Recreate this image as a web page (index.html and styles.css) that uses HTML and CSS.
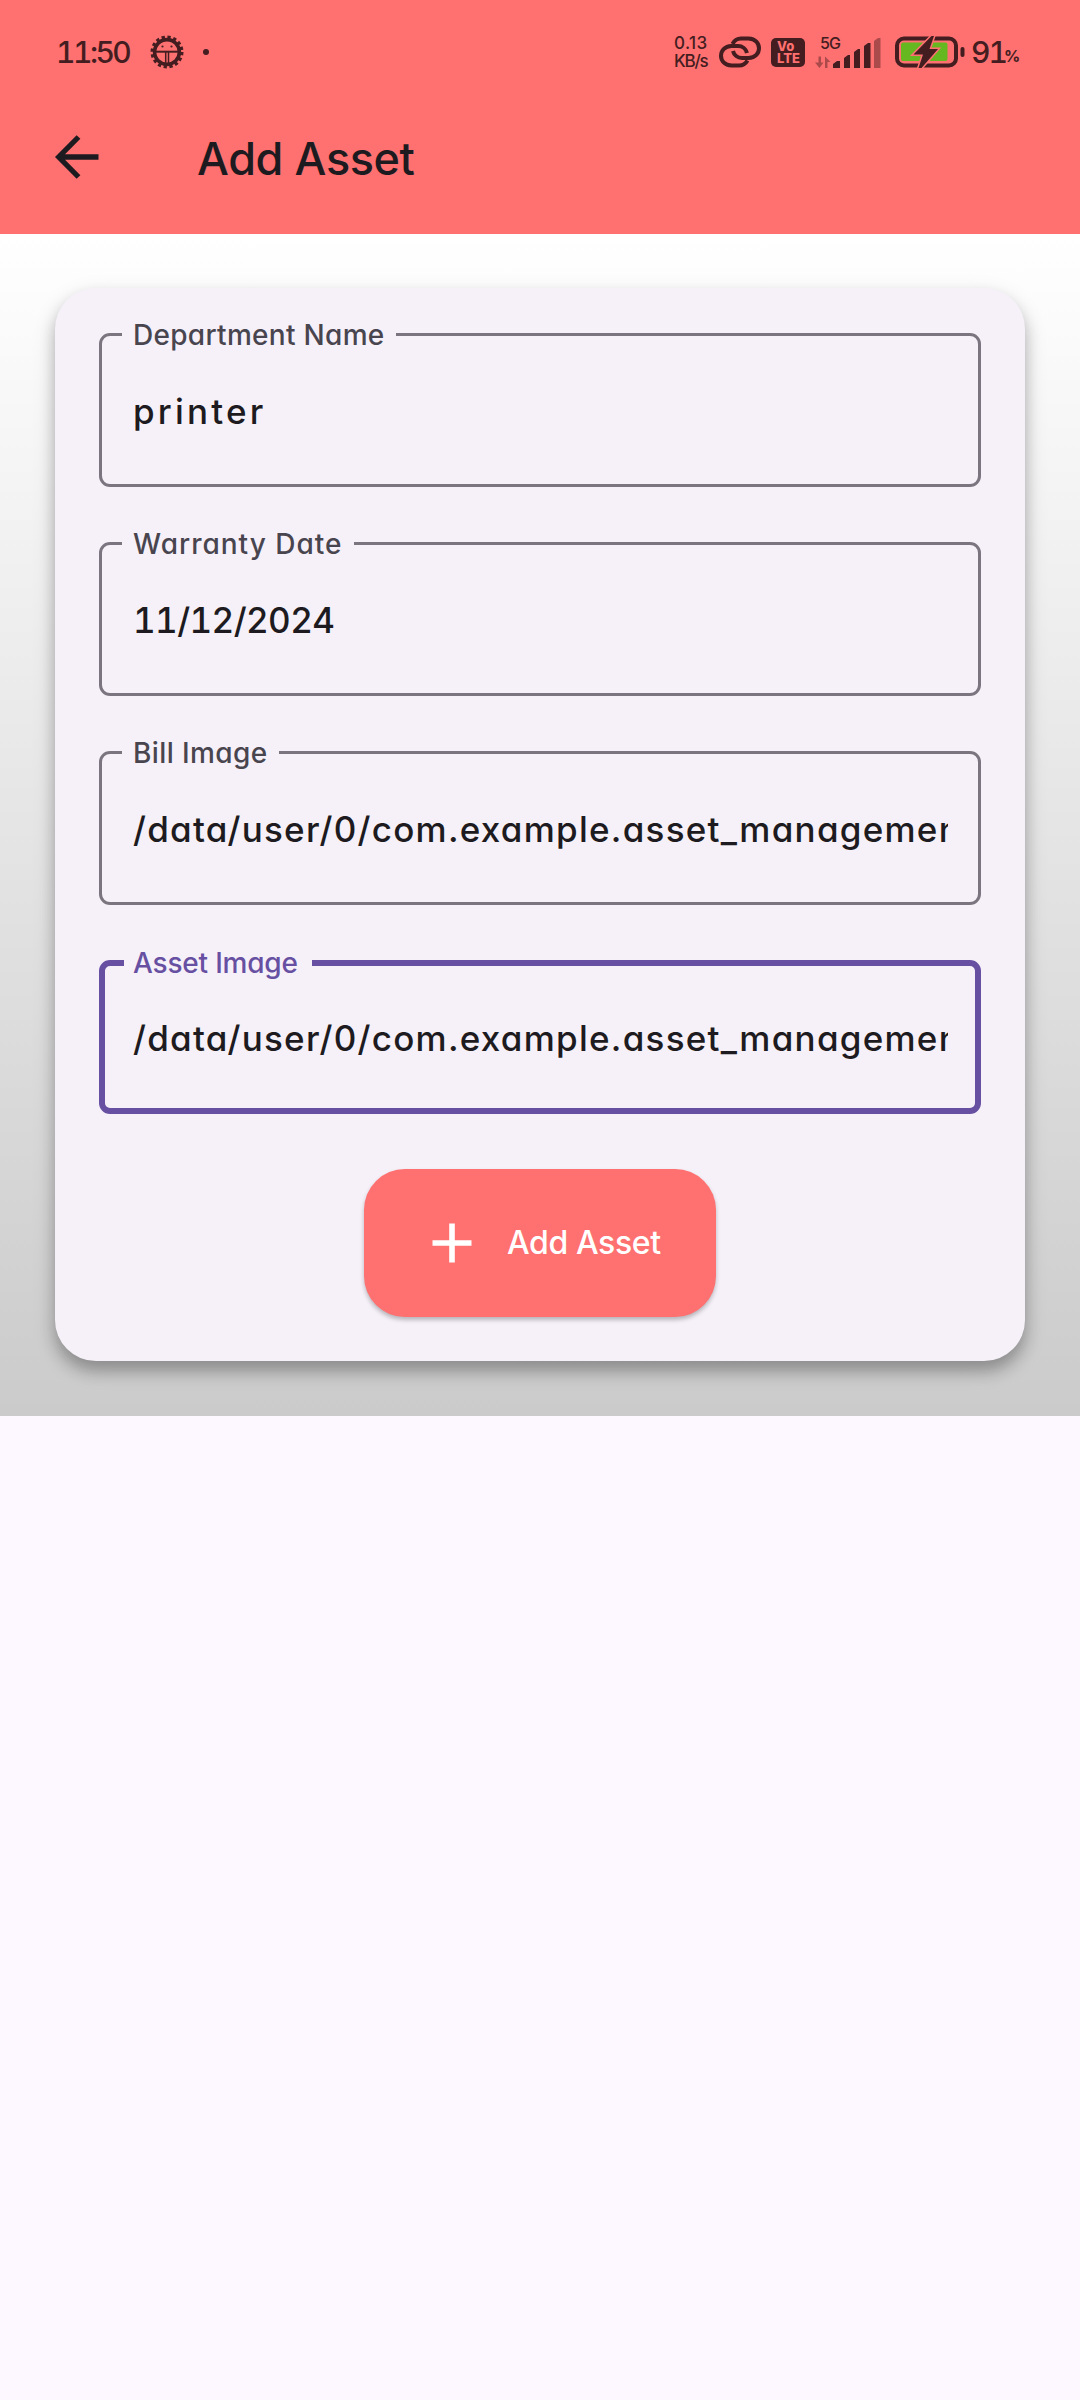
FILE: index.html
```html
<!DOCTYPE html>
<html lang="en">
<head>
<meta charset="utf-8">
<title>Add Asset</title>
<link rel="stylesheet" href="styles.css">
</head>
<body>
<header class="top">
  <div class="status">
    <span class="clock">11:50</span>
    <svg class="gear" width="34" height="34" viewBox="-17 -17 34 34">
      <circle r="12.4" fill="none" stroke="#431d20" stroke-width="3.600"/>
      <circle r="14.700" fill="none" stroke="#431d20" stroke-width="3.600" stroke-dasharray="3.200 2.573"/>
      <path d="M-12-.3H12" stroke="#431d20" stroke-width="2"/>
      <path d="M-1.300 0V13M1.500 0V13" stroke="#431d20" stroke-width="1.500"/>
      <circle cx="-4.5" cy="-5.5" r="1.100" fill="#431d20"/><circle cx="4.5" cy="-5.5" r="1.100" fill="#431d20"/>
    </svg>
    <span class="dot"></span>
    <span class="speed"><span>0.13</span><span>KB/s</span></span>
    <svg class="link" width="42" height="32" viewBox="0 0 42 32" fill="none" stroke="#431d20" stroke-width="4">
      <path d="M13.500 8C15.500 4 18 2.500 22 2.500H29.500C43.500 3 43.500 21.500 29.500 22H23C18.500 22 15 19 14 15"/>
      <path d="M28.500 24.500C26.500 28 24 29.500 20 29.500H12.500C-1.500 29-1.500 10.500 12.500 10H19C23.500 10 27 13 28 17"/>
    </svg>
    <span class="volte"><span>Vo</span><span>LTE</span></span>
    <span class="signal">
      <span class="net">5G</span>
      <svg width="66" height="31" viewBox="0 0 66 31" fill="#431d20">
        <path opacity=".45" d="M3.500 19.500H6V25.500H8.500L4.500 31 0 25.500H3.500ZM10 31V25.500V19.500L15.500 25H12.500V31Z"/>
        <path d="M18 31V27L22 24H25V31ZM29 31V21L33 18H35V31ZM39 31V15L43 12H45V31ZM49 31V9L53 6H55.500V31Z"/>
        <path opacity=".45" d="M59 31V4L63 1H65.500V31Z"/>
      </svg>
    </span>
    <svg class="battery" width="70" height="32" viewBox="0 0 70 32">
      <rect x="2" y="2.500" width="59" height="27" rx="7" fill="none" stroke="#431d20" stroke-width="4"/>
      <rect x="6" y="6.500" width="46.500" height="18.500" rx="2" fill="#66b821"/>
      <path d="M36.500 0 18.500 18.500H28L23.500 32H26.500L43 13H34.500L39 0Z" fill="#431d20" stroke="#ff7070" stroke-width="3" paint-order="stroke"/>
      <rect x="65.500" y="11" width="4" height="10" rx="2" fill="#431d20"/>
    </svg>
    <span class="pct">91</span><span class="sign">%</span>
  </div>
  <div class="bar">
    <svg class="back" width="44" height="44" viewBox="0 0 44 44" fill="none" stroke="#1d1b20" stroke-width="5.300">
      <path d="M43.500 22H4M23.500 2 3.700 22 23.500 42"/>
    </svg>
    <h1 class="title">Add Asset</h1>
  </div>
</header>
<main class="page">
  <form class="card">
    <div class="field"><label class="label l1">Department Name</label><div class="value v1">printer</div></div>
    <div class="field"><label class="label l2">Warranty Date</label><div class="value v2">11/12/2024</div></div>
    <div class="field"><label class="label l3">Bill Image</label><div class="value">/data/user/0/com.example.asset_management</div></div>
    <div class="field focused"><label class="label l4">Asset Image</label><div class="value">/data/user/0/com.example.asset_management</div></div>
    <button type="button" class="add">
      <svg width="40" height="40" viewBox="0 0 40 40"><path d="M20 .5V39.500M.5 20H39.500" stroke="#fff" stroke-width="5.600"/></svg>
      <span>Add Asset</span>
    </button>
  </form>
</main>
</body>
</html>
```
FILE: styles.css
```css
* { box-sizing: border-box; }
body {
  margin: 0;
  min-height: 2400px;
  background: #fdf7ff;
  color: #1d1b20;
  font-family: Inter, "Noto Sans", sans-serif;
  font-feature-settings: "cv11", "calt" 0;
  font-weight: 500;
}
.top { height: 234px; background: #ff7070; }
.status {
  height: 104px;
  padding-left: 56px;
  display: flex;
  align-items: center;
  color: #431d20;
}
.status > * { flex: none; }
.clock { width: 94px; font-size: 30px; letter-spacing: -2.5px; white-space: nowrap; font-feature-settings: "tnum"; }
.dot { width: 6px; height: 6px; border-radius: 50%; background: #431d20; margin-left: 19px; }
.speed { width: 45px; margin-left: 465px; display: flex; flex-direction: column; font-size: 17px; line-height: 18px; letter-spacing: -1.2px; }
.speed span:first-child { letter-spacing: .4px; }
.volte {
  width: 34px; height: 29px; margin: 1px 0 0 10px; padding: 2px 0 0 6px;
  display: flex; flex-direction: column;
  border-radius: 5px; background: #431d20; color: #ff7070;
  font-size: 13px; line-height: 12px; font-weight: 800;
}
.signal { width: 66px; height: 31px; margin-left: 10px; display: grid; }
.signal > * { grid-area: 1 / 1; }
.net { font-size: 16px; line-height: 12px; padding-left: 5px; letter-spacing: -.8px; }
.battery { margin-left: 14px; }
.pct { width: 35px; margin-left: 6px; font-size: 30px; letter-spacing: -2px; font-feature-settings: "tnum"; }
.sign { font-size: 16px; padding-top: 8px; margin-left: -2px; font-weight: 700; }
.bar { height: 106px; padding-left: 55px; display: flex; align-items: center; gap: 98px; }
.title { margin: 3px 0 0; font-size: 45px; font-weight: 500; line-height: 54px; letter-spacing: -.4px; }
.page {
  height: 1182px;
  padding: 54px 55px 55px;
  background: linear-gradient(#fff, #cbcbcb);
}
.card {
  height: 1073px;
  padding: 45px 44px 0;
  display: flex;
  flex-direction: column;
  gap: 55px;
  border-radius: 41px;
  background: #f6f1f9;
  box-shadow: 0 10px 15px rgba(0,0,0,.24), 0 8px 24px rgba(0,0,0,.12);
}
.field { height: 154px; border: 3px solid #7a757f; border-radius: 11px; }
.label {
  display: block;
  width: max-content;
  height: 40px;
  margin: -21px 0 0 20px;
  padding: 0 11px;
  background: #f6f1f9;
  color: #49454f;
  font-size: 28px;
  font-weight: 450;
  line-height: 40px;
  white-space: nowrap;
}
.value {
  margin: 30px 30px 0 31px;
  height: 52px;
  overflow: hidden;
  white-space: nowrap;
  font-size: 35px;
  line-height: 52px;
  letter-spacing: 1.25px;
}
.v1 { letter-spacing: 3.2px; }
.v2 { font-feature-settings: "tnum"; letter-spacing: -.6px; }
.focused { border: 6px solid #6750a2; }
.focused .label { margin: -23px 0 0 19px; padding-left: 9px; padding-right: 14px; color: #6750a2; }
.focused .value { margin: 29px 27px 0 28px; }
.l1 { letter-spacing: .3px; }
.l2 { letter-spacing: 1px; }
.l3 { letter-spacing: .4px; }
.l4 { letter-spacing: -.2px; }
.add {
  align-self: center;
  width: 352px; height: 148px;
  padding: 0 0 0 68px;
  display: flex; align-items: center; gap: 35px;
  border: 0; border-radius: 41px;
  background: #ff7070;
  color: #fff;
  font: inherit;
  font-feature-settings: inherit;
  font-size: 32px;
  letter-spacing: -.4px;
  line-height: 38px;
  white-space: nowrap;
  box-shadow: 0 3px 4px rgba(0,0,0,.25);
}
```
